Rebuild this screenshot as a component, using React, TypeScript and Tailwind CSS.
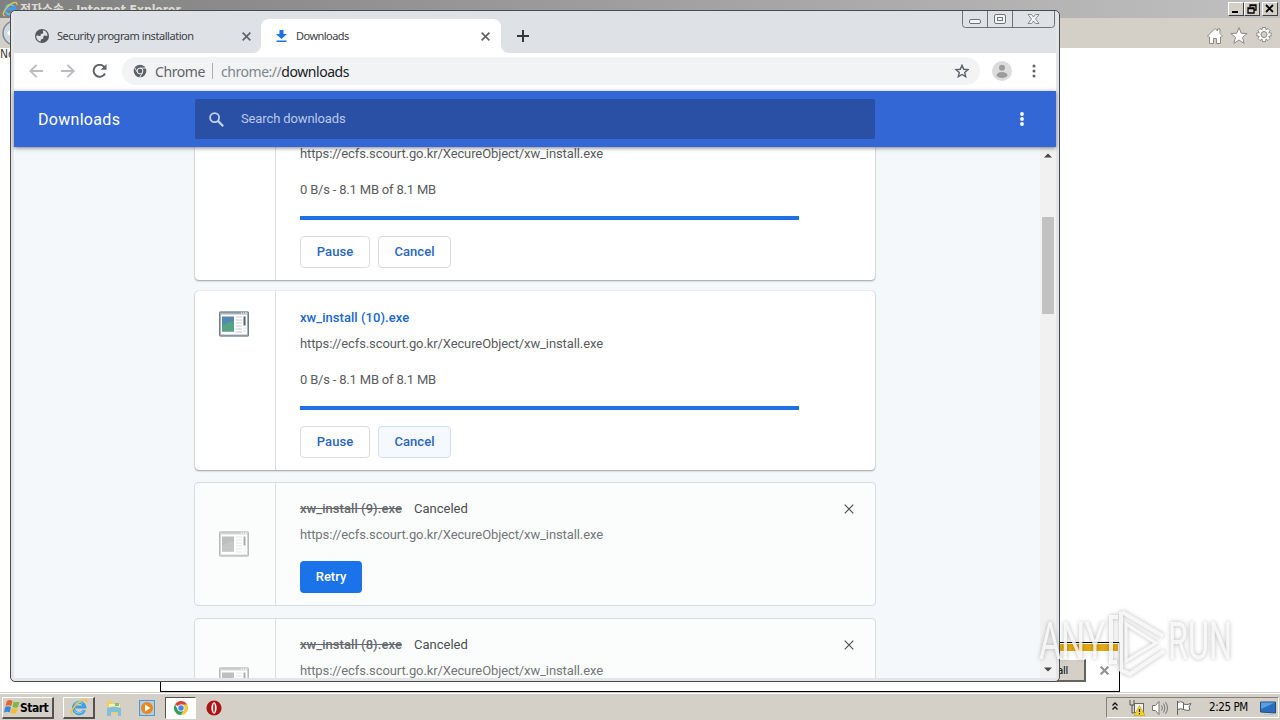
import React from "react";

const X = ({ className = "", s = 2 }: { className?: string; s?: number }) => (
  <svg className={className} viewBox="0 0 10 10" fill="none" stroke="currentColor" strokeWidth={s}>
    <path d="M.7.7l8.6 8.6M9.3.7L.7 9.3" />
  </svg>
);

const IeLogo = ({ className = "" }: { className?: string }) => (
  <svg className={className} viewBox="0 0 20 20" fill="none">
    <path d="M16 13.5A6.3 6.3 0 1 1 16.400 10H6" stroke="#3f9fe6" strokeWidth="3.400" />
    <path d="M15 14.500A6.800 6.800 0 0 1 4.500 14M5 7A6 6 0 0 1 14 6" stroke="#a5def9" strokeWidth="1" />
    <path d="M3.500 18.500C-1 18 3 9.500 10 4.500 15 1 19.500 .5 18.500 5" stroke="#f0c53c" strokeWidth="1.700" />
  </svg>
);

const AppIcon = ({ gray = false }: { gray?: boolean }) => (
  <svg className={gray ? "mr-[2px] h-[26px] w-8 opacity-50 grayscale" : "mr-[2px] h-[26px] w-8"} viewBox="0 0 32 26">
    <rect x="1" y=".5" width="30" height="25" rx="1" fill="#a7b1b9" />
    <rect x="1.500" y="1" width="29" height="24" rx="1" fill="none" stroke="#727c84" />
    <rect x="3" y="3.500" width="26" height="20" fill="#fff" />
    <path d="M23 2h1M25 2h1M27 2h2" stroke="#fff" />
    <rect x="4" y="5.500" width="12" height="15" fill="#5588b0" />
    <path d="M4 14c5-1 8-4 12-4v10.500H4z" fill="#57a283" />
    <path d="M18 6h6M18 9h6M18 12h6M18 15h6M18 18h6M18 21h6" stroke="#c6ccd1" />
    <path d="M26.500 5.500v9" stroke="#4c6271" strokeWidth="2" />
    <path d="M25 17h3M25 20h3" stroke="#d9dee2" />
  </svg>
);

const ChromeMark = ({ className = "" }: { className?: string }) => (
  <svg className={className} viewBox="0 0 14 14">
    <circle cx="7" cy="7" r="6.300" fill="#5f6368" />
    <circle cx="7" cy="7" r="2.900" fill="none" stroke="#f1f3f4" strokeWidth="1" />
    <path d="M7 4.100h5.800M4.500 8.500L1.600 3.600M9.500 8.500L6.800 13.200" stroke="#f1f3f4" strokeWidth=".9" />
  </svg>
);

const Url = ({ dim = false }: { dim?: boolean }) => (
  <div className={dim ? "h-4 text-[13px] leading-4 tracking-[-0.105px] text-[#747679]" : "h-4 text-[13px] leading-4 tracking-[-0.105px] text-[#5a5c60]"}>
    https://ecfs.scourt.go.kr/XecureObject/xw_install.exe
  </div>
);

function ActiveCard({ name = "", hover = false }: { name?: string; hover?: boolean }) {
  return (
    <section className="flex h-[179px] w-[680px] shrink-0 rounded bg-white shadow-[0_1px_2px_rgba(0,0,0,0.35),0_0_1px_rgba(0,0,0,0.3)]">
      <div className="flex w-[81px] justify-center border-r border-[#dadce0] pt-5">
        <AppIcon />
      </div>
      <div className="flex flex-col pl-6 pt-[19px]">
        <div className="h-4 text-[13px] font-medium leading-4 tracking-[0.05px] text-[#1967d2]">{name}</div>
        <div className="mt-[10px]"><Url /></div>
        <div className="mt-5 h-4 text-[13px] leading-4 tracking-[-0.19px] text-[#5a5c60]">0 B/s - 8.1 MB of 8.1 MB</div>
        <div className="mt-[18px] h-1 w-[499px] bg-[#1f6fe5]" />
        <div className="mt-4 flex gap-2 text-[13px] font-medium tracking-[0.05px] text-[#2a65c4]">
          <button className="h-8 w-[70px] rounded border border-[#dadce0]">Pause</button>
          <button className={hover ? "h-8 w-[73px] rounded border border-[#d2dff2] bg-[#f5f9ff]" : "h-8 w-[73px] rounded border border-[#dadce0]"}>Cancel</button>
        </div>
      </div>
    </section>
  );
}

function CanceledCard({ name }: { name: string }) {
  return (
    <section className="flex h-[124px] w-[682px] shrink-0 rounded border border-[#d9dddf] bg-[#fbfdfd]">
      <div className="flex w-[81px] items-center justify-center border-r border-[#dadce0]">
        <AppIcon gray />
      </div>
      <div className="flex grow flex-col pl-6 pt-[18px]">
        <div className="flex h-4 text-[13px] leading-4 text-[#4b4e52]">
          <span className="w-[114px] font-medium tracking-[0.06px] text-[#66696d]"><s>{name}</s></span>
          <span>Canceled</span>
          <X s={1.200} className="ml-auto mr-[21px] mt-[3px] h-[10px] w-[10px] text-[#4f5256]" />
        </div>
        <div className="mt-[10px]"><Url dim /></div>
        <button className="mt-[18px] h-8 w-[62px] rounded bg-[#1a73e8] text-[13px] font-medium text-white">Retry</button>
      </div>
    </section>
  );
}

function WinButton({ children }: { children: React.ReactNode }) {
  return (
    <span className="block h-[14px] w-4 border border-b-[#404040] border-l-white border-r-[#404040] border-t-white bg-[#d4d0c8]">
      <svg className="-ml-px -mt-px h-[14px] w-4" viewBox="0 0 16 14" fill="none" stroke="#000">{children}</svg>
    </span>
  );
}

function BrowserFrame() {
  return (
    <div className="flex h-[692px] flex-col bg-white">
      <div className="flex h-[18px] shrink-0 items-center bg-gradient-to-r from-[#808080] to-[#c0c0c0]">
        <IeLogo className="ml-[2px] h-4 w-4" />
        <span className="ml-[2px] whitespace-nowrap pt-px font-['DejaVu_Sans_Condensed','Noto_Sans_CJK_KR',sans-serif] text-[12px] font-bold leading-4 tracking-[0px] text-[#dedbd5]">전자소송 - Internet Explorer</span>
        <div className="ml-auto mr-[2px] flex">
          <WinButton><path d="M4 10h6" strokeWidth="2" /></WinButton>
          <WinButton><path d="M6 5V3h6v5h-2M6 3.500h6M4 6h6v5H4zM4 6.500h6" strokeWidth="1.300" /></WinButton>
          <span className="w-[2px]" />
          <WinButton><path d="M4 3l7 7M11 3L4 10" strokeWidth="1.800" /></WinButton>
        </div>
      </div>
      <div className="flex h-[30px] shrink-0 items-center bg-[#d4d0c8]">
        <svg className="h-[28px] w-[28px]" viewBox="0 0 28 28">
          <circle cx="15" cy="14" r="12" fill="#cdd8e0" stroke="#848b91" strokeWidth="1.500" />
          <path d="M14 9l-5 5 5 5M9 14h12" fill="none" stroke="#fff" strokeWidth="3" />
        </svg>
        <svg className="ml-auto mr-[6px] mt-[5px] h-5 w-[68px]" viewBox="0 0 68 20" fill="#fff" stroke="#8d8a84">
          <path d="M1.500 10L9 2.500l2.500 2.500V3h2.500v4.500l2.500 2.500-1 1h-1v6.500h-4v-5H7.500v5h-4V11h-1z" />
          <path d="M33 1.500l2.200 5.700 6 .3-4.700 3.900 1.600 6L33 14l-5.100 3.400 1.600-6-4.700-3.900 6-.3z" />
          <path d="M56.500 1.500h3l.5 2.300 2-1.300 2 2-1.300 2 2.400.5v3l-2.400.5 1.300 2-2 2-2-1.300-.5 2.400h-3l-.5-2.400-2 1.300-2-2 1.300-2-2.400-.5V7l2.400-.5-1.300-2 2-2 2 1.300z" />
          <circle cx="58" cy="8.500" r="3" fill="#d4d0c8" />
        </svg>
      </div>
      <div className="font-['DejaVu_Sans_Condensed',sans-serif] text-[12px] leading-[13px] text-[#444]">No</div>
    </div>
  );
}

function TabStrip() {
  return (
    <div className="flex h-[42px] shrink-0 bg-[#dee1e6] font-['Noto_Sans','DejaVu_Sans_Condensed',sans-serif] text-[11px] text-[#3c4043]">
      <div className="flex w-[247px] items-center bg-white">
        <div className="flex h-full w-full items-center rounded-br-lg bg-[#dee1e6] pl-[21px] pt-[8px]">
          <svg className="h-[14px] w-[14px]" viewBox="0 0 14 14">
            <circle cx="7" cy="7" r="7" fill="#54575b" />
            <path d="M8.500 1.200C7 2.500 9 3 8 4.500L5.500 5 6 6.500 4.500 7 2 6.200 1.200 7.500C1.500 10 3 12 5.500 12.600L6 10.500 8.500 9.500 8 8l1.500-1.500 3 .5C12.500 4 11 2 8.500 1.200z" fill="#dee1e6" />
            <path d="M2.500 4.500L5 2.500 7 4 4.500 6z" fill="#54575b" />
          </svg>
          <span className="ml-2 whitespace-nowrap tracking-[-0.44px]">Security program installation</span>
          <X s={1.800} className="ml-auto mr-[10px] h-[9px] w-[9px] text-[#5f6368]" />
        </div>
      </div>
      <div className="flex bg-[#dee1e6] pt-[8px]">
        <div className="flex w-[240px] items-center rounded-t-lg bg-white pl-[15px]">
          <svg className="h-3 w-[11px]" viewBox="0 0 11 12" fill="#1a73e8">
            <path d="M3.500 0h4v4H11L5.500 9 0 4h3.500zM.5 10.500h10V12H.5z" />
          </svg>
          <span className="ml-[9px] tracking-[-0.54px]">Downloads</span>
          <X s={1.800} className="ml-auto mr-[11px] h-[9px] w-[9px] text-[#5f6368]" />
        </div>
      </div>
      <div className="flex grow bg-white">
        <div className="flex grow rounded-bl-lg bg-[#dee1e6]">
          <svg className="ml-[16px] mt-[19px] h-3 w-3" viewBox="0 0 12 12"><path d="M6 0v12M0 6h12" stroke="#33363a" strokeWidth="2" /></svg>
          <svg className="ml-auto h-[17px] w-[94px]" viewBox="0 0 94 17" fill="none" stroke="#6f7378">
            <path d="M.5-1v14.500a3 3 0 0 0 3 3h86a3 3 0 0 0 3-3V-1M25.500 0v16M50.500 0v16" />
            <rect x="7.500" y="8.500" width="11" height="4" rx="1.500" fill="#f4f5f7" />
            <rect x="32.500" y="3.500" width="11" height="9" rx="1.500" fill="#f4f5f7" />
            <rect x="35.500" y="6.500" width="5" height="3" />
            <path d="M66 3.500h3.500L71.500 6l2-2.500H77L73.500 8l3.500 4.500h-3.500l-2-2.500-2 2.500H66L69.500 8z" fill="#f4f5f7" strokeWidth=".8" />
          </svg>
        </div>
      </div>
    </div>
  );
}

function Toolbar() {
  return (
    <div className="flex h-[38px] shrink-0 items-center bg-white pb-[2px]">
      <svg className="ml-[15px] h-[14px] w-[78px]" viewBox="0 0 78 14" fill="none" strokeWidth="1.800">
        <path d="M14 7H1M7.500 .8L1.200 7l6.300 6.200M32 7h13M38.500 .8L44.800 7l-6.300 6.200" stroke="#b9bcc0" />
        <path d="M76 9.500A6 6 0 1 1 75.500 3.300" stroke="#5f6368" strokeWidth="2" />
        <path d="M77.500 0v5.800h-5.800z" fill="#5f6368" />
      </svg>
      <div className="ml-[15px] flex h-7 w-[858px] items-center rounded-full bg-[#f1f3f4] font-['Noto_Sans',sans-serif] text-[14px]">
        <ChromeMark className="ml-[11px] h-[14px] w-[14px]" />
        <span className="ml-2 w-[50px] whitespace-nowrap tracking-[-0.4px] text-[#5f6368]">Chrome</span>
        <span className="ml-[7px] h-4 w-px bg-[#aeb1b5]" />
        <span className="ml-2 whitespace-nowrap tracking-[-0.46px] text-[#80868b]">chrome://<span className="text-[#202124]">downloads</span></span>
        <svg className="ml-auto mr-[11px] h-[14px] w-[14px]" viewBox="0 0 14 14" fill="none" stroke="#5f6368" strokeWidth="1.400">
          <path d="M7 1.300l1.700 4 4.300.4-3.300 2.800 1 4.200L7 10.500l-3.700 2.200 1-4.200L1 5.700l4.300-.4z" />
        </svg>
      </div>
      <svg className="ml-[12px] h-5 w-5" viewBox="0 0 20 20">
        <circle cx="10" cy="10" r="10" fill="#dcdcdc" />
        <circle cx="10" cy="6.700" r="3" fill="#9c9c9c" /><ellipse cx="10" cy="14" rx="5.500" ry="3" fill="#9c9c9c" />
      </svg>
      <svg className="ml-[20px] h-[14px] w-[4px]" viewBox="0 0 4 14" fill="#5f6368">
        <circle cx="2" cy="2" r="1.500" /><circle cx="2" cy="7" r="1.500" /><circle cx="2" cy="12" r="1.500" />
      </svg>
    </div>
  );
}

function ChromeWindow() {
  return (
    <div className="absolute left-[10px] top-[10px] flex h-[672px] w-[1050px] flex-col rounded-[5px] border border-[#4a4b4d] bg-[#e3e5e8] px-[3px] pb-[3px] font-['Roboto',sans-serif]">
      <TabStrip />
      <Toolbar />
      <header className="relative z-10 flex h-14 shrink-0 items-center bg-[#3367d6] shadow-[0_1px_4px_rgba(0,0,0,0.5)]">
        <h1 className="w-[181px] pl-6 pt-px text-[16px] tracking-[0.3px] text-white">Downloads</h1>
        <div className="flex h-10 w-[680px] items-center rounded-[2px] bg-[#2a50a6] pl-[14px]">
          <svg className="h-[15px] w-[15px]" viewBox="0 0 15 15" fill="none" stroke="#c4d1ee" strokeWidth="1.800">
            <circle cx="5.600" cy="5.600" r="4.500" /><path d="M8.900 8.900l5.300 5.300" strokeWidth="2.200" />
          </svg>
          <span className="ml-[17px] text-[13px] tracking-[-0.12px] text-[#b9c8ea]">Search downloads</span>
        </div>
        <svg className="ml-[145px] h-[14px] w-[4px]" viewBox="0 0 4 14" fill="#fff">
          <circle cx="2" cy="2" r="1.900" /><circle cx="2" cy="7" r="1.900" /><circle cx="2" cy="12" r="1.900" />
        </svg>
      </header>
      <div className="flex min-h-0 grow bg-[#f5f8fb]">
        <div className="flex grow flex-col overflow-hidden pl-[181px]">
          <div className="-mt-[46px] flex shrink-0 flex-col gap-[11px]">
            <ActiveCard />
            <ActiveCard name="xw_install (10).exe" hover />
          </div>
          <div className="-ml-px mt-[12px] flex flex-col gap-[12px]">
            <CanceledCard name="xw_install (9).exe" />
            <CanceledCard name="xw_install (8).exe" />
          </div>
        </div>
        <div className="flex w-4 shrink-0 flex-col items-center bg-[#f1f1f1] pb-[6px] pt-[6px]">
          <svg className="h-[5px] w-2" viewBox="0 0 8 5"><path d="M0 4.500h8L4 .5z" fill="#454545" /></svg>
          <div className="mt-[59px] h-[97px] w-3 bg-[#c1c1c1]" />
          <svg className="mt-auto h-[5px] w-2" viewBox="0 0 8 5"><path d="M0 .5h8l-4 4z" fill="#454545" /></svg>
        </div>
      </div>
    </div>
  );
}

function InstallBar() {
  return (
    <div className="absolute left-[160px] top-[642px] flex h-[50px] w-[960px] flex-col border border-black bg-white p-px">
      <div className="h-[7px] bg-[#e3a812]" />
      <div className="flex grow items-center justify-end">
        <button className="mr-[14px] mt-[-1px] h-[23px] w-[80px] border border-b-2 border-r-2 border-b-[#66635f] border-r-[#66635f] border-l-white border-t-white bg-[#d4d0c8] pr-[16px] pt-[3px] text-right font-['DejaVu_Sans_Condensed',sans-serif] text-[11px] leading-4 tracking-[-0.3px]">Install</button>
        <X s={2.400} className="mr-[9px] h-[9px] w-[9px] text-[#929292]" />
      </div>
    </div>
  );
}

function Watermark() {
  return (
    <svg className="absolute left-[1034px] top-[604px] h-[76px] w-[206px] drop-shadow-[0_0_2px_rgba(0,0,0,0.35)]" viewBox="0 0 206 76" fill="#fff" fillOpacity=".8">
      <g fontFamily="Roboto, sans-serif" fontSize="51">
        <text x="5" y="55" textLength="66" lengthAdjust="spacingAndGlyphs">ANY</text>
        <text x="134" y="55" textLength="64" lengthAdjust="spacingAndGlyphs">RUN</text>
      </g>
      <g fill="none" stroke="#fff" strokeOpacity=".8" strokeWidth="4">
        <path d="M84 13h-7v45h6M87 8v58l9 4 34-23M88 8l41 24" />
        <path d="M92 20l30 19-30 18z" strokeWidth="3" />
      </g>
    </svg>
  );
}

function Taskbar() {
  return (
    <div className="flex h-7 items-center border-t border-[#d4d0c8] bg-[#d4d0c8] pt-[2px] shadow-[inset_0_1px_0_#fff]">
      <button className="ml-[2px] flex h-[22px] w-[52px] items-center border border-b-2 border-r-2 border-b-[#55524e] border-r-[#55524e] border-l-white border-t-white">
        <svg className="ml-px h-4 w-4 shrink-0" viewBox="0 0 16 16">
          <path d="M3 2q3-2 5.500 0L7.300 7Q4.500 5.500 1.500 7z" fill="#e8602c" />
          <path d="M9.500 2.500q3 1.500 6 0L14 8q-3 1.500-5.500 0z" fill="#79b943" />
          <path d="M1.200 8q3-1.500 5.800 0L5.800 13.500Q3 12 0 13.500z" fill="#3c86d9" />
          <path d="M8 9q3 1.500 5.700 0l-1.500 5q-3 1.500-5.500 0z" fill="#f5bd2a" />
        </svg>
        <span className="pt-[2px] font-['DejaVu_Sans_Condensed',sans-serif] text-[12px] font-bold leading-4 tracking-[-0.5px] text-black">Start</span>
      </button>
      <div className="ml-[9px] flex h-[22px] w-8 items-center justify-center border border-b-2 border-r-2 border-b-[#55524e] border-r-[#55524e] border-l-white border-t-white">
        <IeLogo className="h-[18px] w-[18px]" />
      </div>
      <svg className="ml-[11px] h-4 w-4" viewBox="0 0 16 16">
        <path d="M1 1h5l1 2h7v3h1v8H1z" fill="#edcf69" /><path d="M3 4h11v5H3z" fill="#fbefae" />
        <path d="M1 8q7-3 14 0v8h-3v-4H5v4H1z" fill="#7fc0de" /><path d="M9 3h4v3H9z" fill="#8dbb72" />
      </svg>
      <svg className="ml-[17px] h-4 w-4" viewBox="0 0 16 16">
        <rect x=".5" y=".5" width="15" height="15" fill="#acd0ea" stroke="#5696c8" />
        <circle cx="8" cy="8" r="6" fill="#ef8418" /><path d="M6 4.500v7L11.500 8z" fill="#fff" />
      </svg>
      <div className="ml-[10px] flex h-[22px] w-[31px] items-center justify-center border border-b-white border-l-[#55524e] border-r-white border-t-[#55524e] bg-white">
        <svg className="h-[14px] w-[14px]" viewBox="0 0 16 16">
          <path d="M8 8L1.070 4A8 8 0 0 1 14.930 4z" fill="#dc4437" />
          <path d="M8 8V4h6.930A8 8 0 0 1 8 16l3.460-6z" fill="#f6c73b" />
          <path d="M8 16A8 8 0 0 1 1.070 4l3.470 6L8 12l3.460-2z" fill="#349e58" />
          <circle cx="8" cy="8" r="4" fill="#fff" /><circle cx="8" cy="8" r="3.100" fill="#4285f4" />
        </svg>
      </div>
      <svg className="ml-[10px] h-4 w-4" viewBox="0 0 16 16">
        <circle cx="8" cy="8" r="7.600" fill="#a91514" /><ellipse cx="8" cy="8" rx="2.600" ry="5.800" fill="#fff" /><ellipse cx="8" cy="8" rx="1" ry="4.800" fill="#c33" />
      </svg>
      <div className="ml-auto mr-[1px] flex h-[21px] w-[173px] items-center border border-b-white border-l-[#858179] border-r-white border-t-[#858179]">
        <svg className="mb-[3px] ml-[5px] h-2 w-[6px]" viewBox="0 0 6 8" fill="none" stroke="#111" strokeWidth="1.300"><path d="M.5 3.500L3 1l2.500 2.500M.5 7.500L3 5l2.500 2.500" /></svg>
        <svg className="ml-[11px] h-4 w-4" viewBox="0 0 16 16">
          <path d="M1 0v5h4V0M3 5v8h2" fill="none" stroke="#555" /><rect x="5.500" y="3.500" width="9" height="9" fill="#f1f1f1" stroke="#666" />
          <path d="M10.500 5.500L16 15.500H5z" fill="#f7d51e" stroke="#af9214" strokeWidth=".5" /><path d="M10.500 9v3M10.500 13v1.300" stroke="#222" strokeWidth="1.200" />
        </svg>
        <svg className="ml-[7px] h-4 w-4" viewBox="0 0 16 16" fill="none" stroke="#777">
          <path d="M.5 5.500h3l3.500-4v13l-3.500-4h-3z" fill="#fff" /><path d="M9.500 5.500q2 2.500 0 5M11.500 3.500q3 4.500 0 9M13.500 2q4 6 0 12" />
        </svg>
        <svg className="ml-[8px] h-4 w-4" viewBox="0 0 16 16" fill="#fff" stroke="#666">
          <path d="M1.500 1v14M1.500 2.500q3-1.500 6 0v7q-3-1.500-6 0zM7.500 4q3 1.500 7.500-.5l-2 3.500 1 3q-3 1-6.500-.5z" />
        </svg>
        <span className="ml-[17px] whitespace-nowrap font-['DejaVu_Sans_Condensed',sans-serif] text-[11.500px] tracking-[-0.4px] text-black">2:25 PM</span>
        <svg className="ml-auto mr-[2px] h-4 w-4" viewBox="0 0 16 16"><path d="M.5 2h15v11l-15-1z" fill="#276fbe" stroke="#244d7c" /><path d="M1 2.500h14L1 9z" fill="#599fe0" /><path d="M4 14.500h9" stroke="#aac6dc" /></svg>
      </div>
    </div>
  );
}

export default function App() {
  return (
    <main className="relative flex h-[720px] w-[1280px] flex-col overflow-hidden bg-white">
      <BrowserFrame />
      <Taskbar />
      <InstallBar />
      <ChromeWindow />
      <Watermark />
    </main>
  );
}
